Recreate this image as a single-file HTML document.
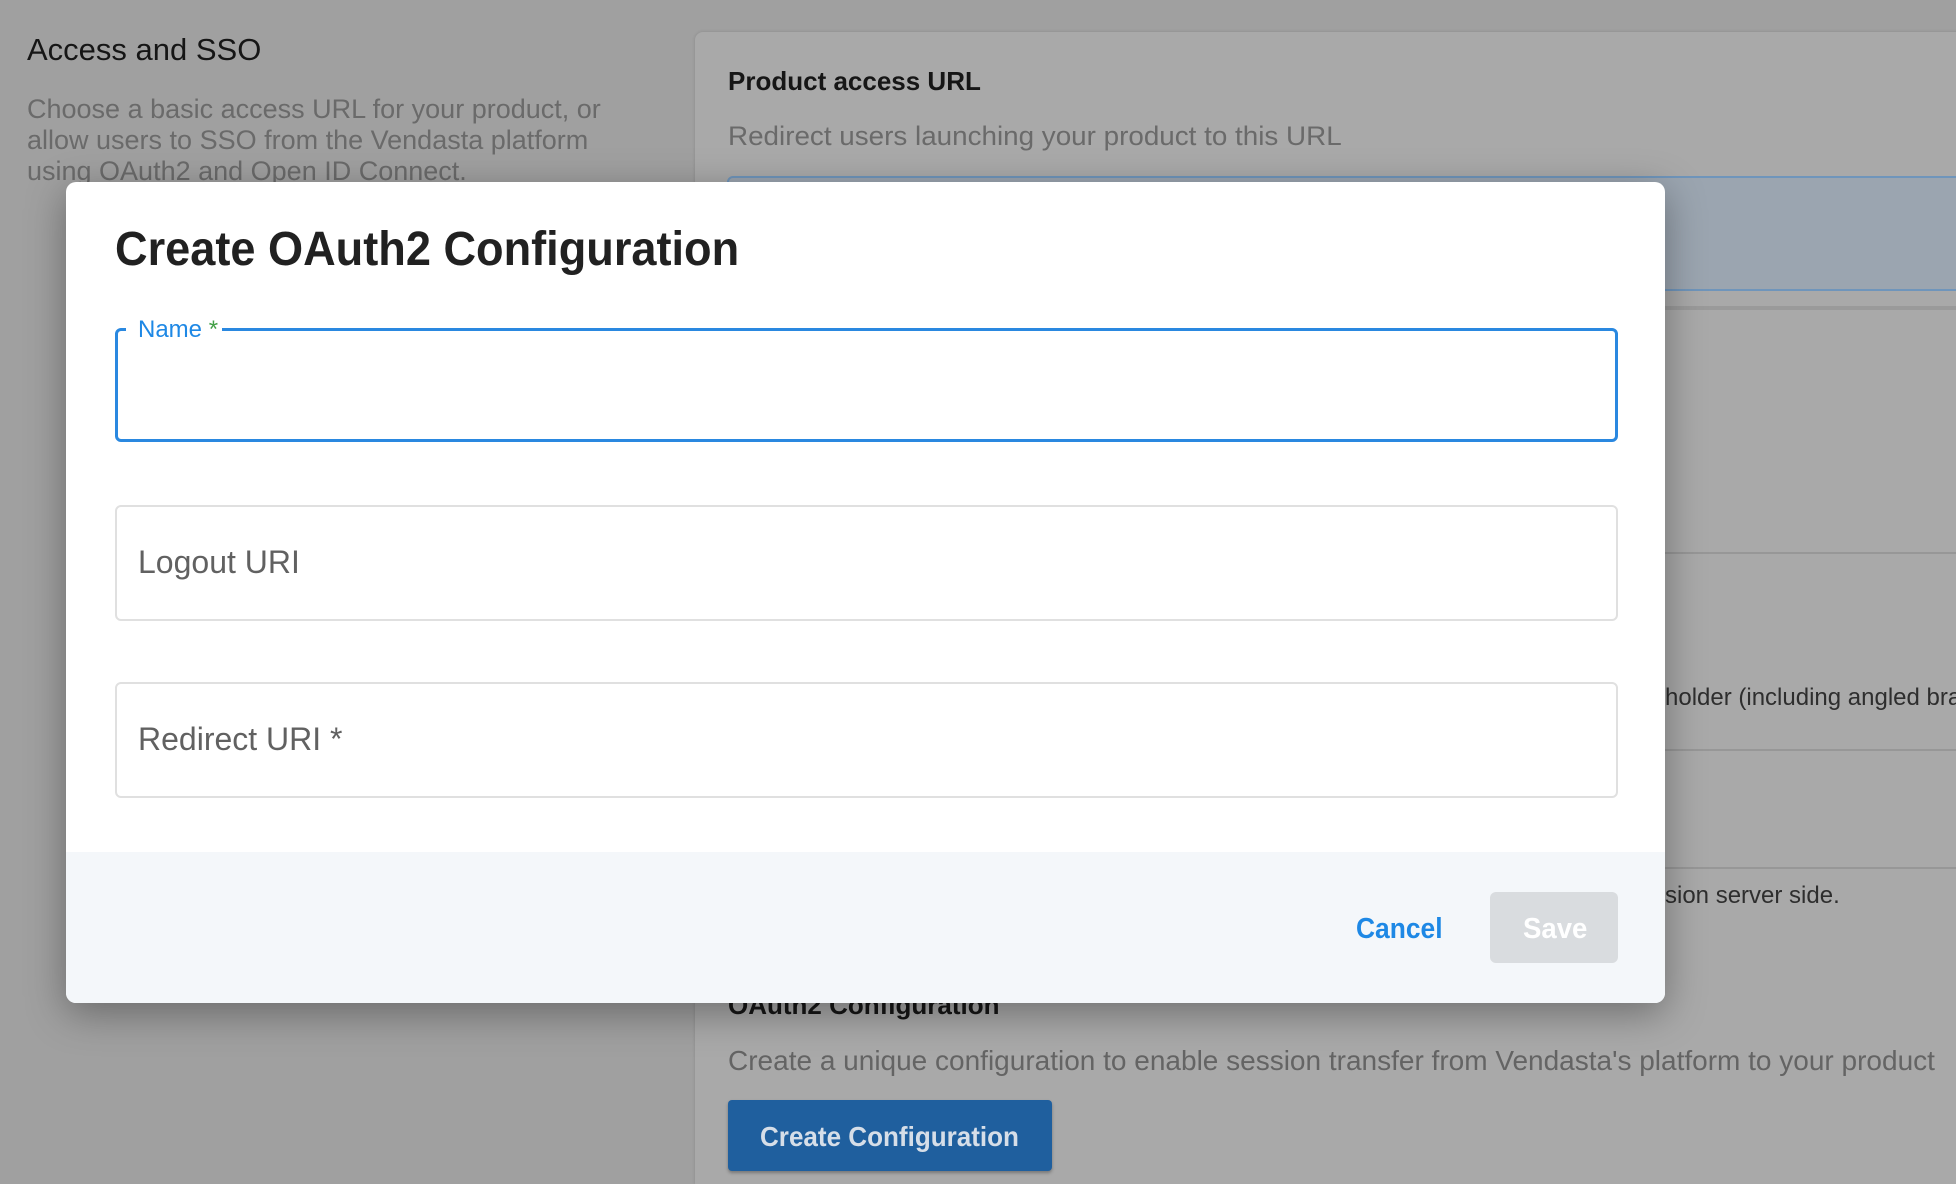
<!DOCTYPE html>
<html><head><meta charset="utf-8"><style>
*{margin:0;padding:0;box-sizing:border-box}
html{width:1956px;height:1184px;overflow:hidden}
body{width:1956px;height:1184px;overflow:hidden;background:#a0a0a0;font-family:"Liberation Sans",sans-serif;position:relative}
.t{position:absolute;white-space:nowrap;transform-origin:left top}
.card{position:absolute;left:695px;top:32px;width:1300px;height:1152px;background:#a9a9a9;border-radius:8px 0 0 0;box-shadow:0 0 3px rgba(0,0,0,.15)}
.hr{position:absolute;left:1665px;width:300px;height:2px;background:#979797}
.dlg{position:absolute;left:66px;top:182px;width:1599px;height:821px;background:#fff;border-radius:10px;overflow:hidden;box-shadow:0 10px 40px rgba(0,0,0,.35)}
.fld{position:absolute;left:49px;width:1503px;border:2px solid #e0e0e0;border-radius:6px}
.foot{position:absolute;left:0;top:670px;width:100%;height:151px;background:#f4f7fa}
</style></head><body>
<div class="t" style="left:27px;top:32px;font-size:31px;color:#161616">Access and SSO</div>
<div class="t" style="left:27px;top:94px;font-size:27px;line-height:31px;color:#6a6a6a">Choose a basic access URL for your product, or<br>allow users to SSO from the Vendasta platform<br>using OAuth2 and Open ID Connect.</div>
<div class="card"></div>
<div class="t" style="left:728px;top:66px;font-size:26px;font-weight:bold;color:#161616">Product access URL</div>
<div class="t" style="left:728px;top:121px;font-size:27px;color:#6a6a6a;transform:scaleX(1.03)">Redirect users launching your product to this URL</div>
<div style="position:absolute;left:727px;top:176px;width:1240px;height:115px;background:#9ba5b0;border:2px solid #6f95bb;border-radius:6px"></div>
<div class="hr" style="top:306px;background:#9a9a9a;height:4px"></div>
<div class="hr" style="top:552px"></div>
<div class="hr" style="top:749px"></div>
<div class="hr" style="top:867px"></div>
<div class="t" style="left:1665px;top:684px;font-size:24px;color:#2e2e2e">holder (including angled brackets)</div>
<div class="t" style="left:1665px;top:882px;font-size:24px;color:#2e2e2e">sion server side.</div>
<div class="t" style="left:728px;top:990px;font-size:26px;font-weight:bold;color:#161616">OAuth2 Configuration</div>
<div class="t" style="left:728px;top:1045px;font-size:28px;color:#646464">Create a unique configuration to enable session transfer from Vendasta's platform to your product</div>
<div style="position:absolute;left:728px;top:1100px;width:324px;height:71px;background:#1f5f9e;border-radius:4px;box-shadow:0 2px 3px rgba(0,0,0,.3)"></div>
<div class="t" style="left:760px;top:1121px;font-size:28px;font-weight:bold;color:#d6dee8;transform:scaleX(.93)">Create Configuration</div>

<div class="dlg">
  <div class="t" style="left:49px;top:40px;font-size:48px;font-weight:bold;color:#212121;transform:scaleX(.94)">Create OAuth2 Configuration</div>
  <div class="fld" style="top:146px;height:114px;border:3px solid #2a88e0"></div>
  <div style="position:absolute;left:60px;top:140px;width:72px;height:10px;background:#fff"></div>
  <div class="t" style="left:72px;top:134px;font-size:24px;color:#1e88e5;background:#fff;padding-right:4px">Name <span style="color:#43a047">*</span></div>
  <div class="fld" style="top:323px;height:116px"></div>
  <div class="t" style="left:72px;top:362px;font-size:32px;color:#616161">Logout URI</div>
  <div class="fld" style="top:500px;height:116px"></div>
  <div class="t" style="left:72px;top:539px;font-size:32px;color:#616161">Redirect URI *</div>
  <div class="foot"></div>
  <div class="t" style="left:1290px;top:731px;font-size:29px;font-weight:bold;color:#1e88e5;transform:scaleX(.91)">Cancel</div>
  <div style="position:absolute;left:1424px;top:710px;width:128px;height:71px;background:#d9dcdf;border-radius:6px"></div>
  <div class="t" style="left:1457px;top:731px;font-size:29px;font-weight:bold;color:#fff;transform:scaleX(.95)">Save</div>
</div>
</body></html>
